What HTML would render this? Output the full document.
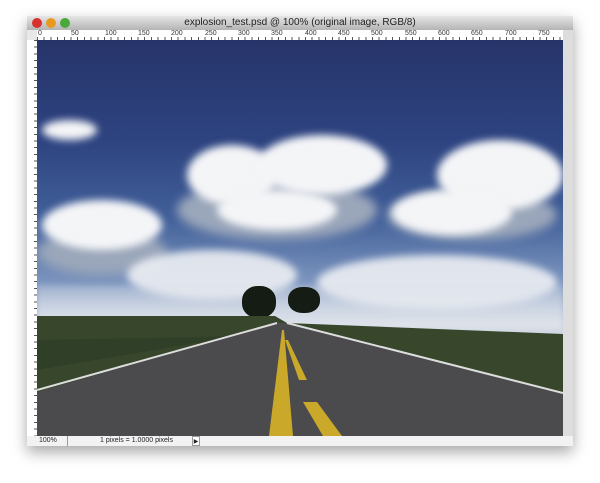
<!DOCTYPE html>
<html><head><style>
body{margin:0;width:600px;height:483px;background:#fff;position:relative;overflow:hidden;font-family:"Liberation Sans",sans-serif}
.win{position:absolute;left:27px;top:16px;width:546px;height:430px;background:#e8e8e8;box-shadow:0 6px 14px rgba(0,0,0,.35)}
.title{position:absolute;left:0;top:0;width:546px;height:14px;background:linear-gradient(#e6e6e6,#b4b4b4);font-size:10px;text-align:center;line-height:14px;color:#222}
.dot{position:absolute;top:2px;width:10px;height:10px;border-radius:50%}
.ruler{position:absolute;background:#fff;overflow:hidden}
.img{position:absolute;left:10px;top:24px;width:526px;height:396px;overflow:hidden;background:linear-gradient(#27346a 0%,#2d4380 25%,#42609a 45%,#7f98c0 62%,#b8c6da 70%,#d0d6e0 74%)}
.c{position:absolute;background:#f4f5f7;border-radius:50%;filter:blur(4px)}
.g{position:absolute;background:#9aa6ba;border-radius:50%;filter:blur(5px)}
.status{position:absolute;left:0;top:420px;width:546px;height:10px;background:#f2f2f2;font-size:7px;line-height:10px;color:#222}
</style></head><body>
<div class="win">
<div class="title"><span class="dot" style="left:5px;background:#d8302c"></span><span class="dot" style="left:19px;background:#e89a20"></span><span class="dot" style="left:33px;background:#4ba83c"></span>explosion_test.psd @ 100% (original image, RGB/8)</div>
<div class="ruler" style="left:10px;top:14px;width:526px;height:10px;background:repeating-linear-gradient(90deg,#555 0 1px,transparent 1px 6.7px) bottom/100% 3px no-repeat,#fff;font-size:7px;color:#333">
<span style="position:absolute;left:1px;top:0">0</span><span style="position:absolute;left:34px">50</span><span style="position:absolute;left:68px">100</span><span style="position:absolute;left:101px">150</span><span style="position:absolute;left:134px">200</span><span style="position:absolute;left:168px">250</span><span style="position:absolute;left:201px">300</span><span style="position:absolute;left:234px">350</span><span style="position:absolute;left:268px">400</span><span style="position:absolute;left:301px">450</span><span style="position:absolute;left:334px">500</span><span style="position:absolute;left:368px">550</span><span style="position:absolute;left:401px">600</span><span style="position:absolute;left:434px">650</span><span style="position:absolute;left:468px">700</span><span style="position:absolute;left:501px">750</span></div>
<div class="ruler" style="left:0;top:24px;width:10px;height:396px;background:repeating-linear-gradient(180deg,#555 0 1px,transparent 1px 6.7px) right/3px 100% no-repeat,#fff"></div>
<div style="position:absolute;left:536px;top:14px;width:10px;height:406px;background:#ddd"></div>
<div class="img">
<div class="c" style="left:5px;top:80px;width:55px;height:20px"></div>
<div class="g" style="left:140px;top:140px;width:200px;height:60px"></div>
<div class="c" style="left:150px;top:105px;width:90px;height:60px"></div>
<div class="c" style="left:220px;top:95px;width:130px;height:60px"></div>
<div class="c" style="left:180px;top:150px;width:120px;height:40px"></div>
<div class="g" style="left:350px;top:150px;width:170px;height:50px"></div>
<div class="c" style="left:400px;top:100px;width:126px;height:70px"></div>
<div class="c" style="left:355px;top:150px;width:120px;height:45px"></div>
<div class="g" style="left:0;top:190px;width:130px;height:45px"></div>
<div class="c" style="left:5px;top:160px;width:120px;height:50px"></div>
<div class="c" style="left:90px;top:210px;width:170px;height:50px;opacity:.85"></div>
<div class="c" style="left:280px;top:215px;width:240px;height:55px;opacity:.85"></div>
<div style="position:absolute;left:0;top:245px;width:526px;height:45px;background:linear-gradient(rgba(220,225,235,.3),#dfe3ea);filter:blur(3px)"></div>
<div class="c" style="left:205px;top:246px;width:34px;height:32px;background:#151c14;filter:none;border-radius:45%"></div>
<div class="c" style="left:251px;top:247px;width:32px;height:26px;background:#151c14;filter:none;border-radius:45%"></div>
<svg style="position:absolute;left:0;top:0" width="526" height="396">
<polygon points="0,276 238,276 250,283 526,294 526,396 0,396" fill="#38472c"/>
<polygon points="0,300 200,296 0,330" fill="#2c3a24" opacity=".6"/>
<polygon points="240,283 248,283 526,352 526,396 0,396 0,352" fill="#4b4b4d"/>
<polyline points="0,350 240,283" stroke="#ddd" stroke-width="2" fill="none"/>
<polyline points="250,283 526,353" stroke="#ddd" stroke-width="2" fill="none"/>
<polygon points="245,290 247,290 256,396 232,396" fill="#c9a82a"/>
<polygon points="248,300 251,300 270,340 262,340" fill="#c9a82a"/>
<polygon points="266,362 280,362 305,396 286,396" fill="#c9a82a"/>
</svg>
</div>
<div class="status"><span style="position:absolute;left:12px">100%</span><span style="position:absolute;left:40px;width:12px;border-left:1px solid #999;height:10px"></span><span style="position:absolute;left:73px">1 pixels = 1.0000 pixels</span><span style="position:absolute;left:165px;width:8px;height:10px;background:#fff;border:1px solid #999;box-sizing:border-box;font-size:6px;text-align:center">▶</span></div>
</div>
</body></html>
